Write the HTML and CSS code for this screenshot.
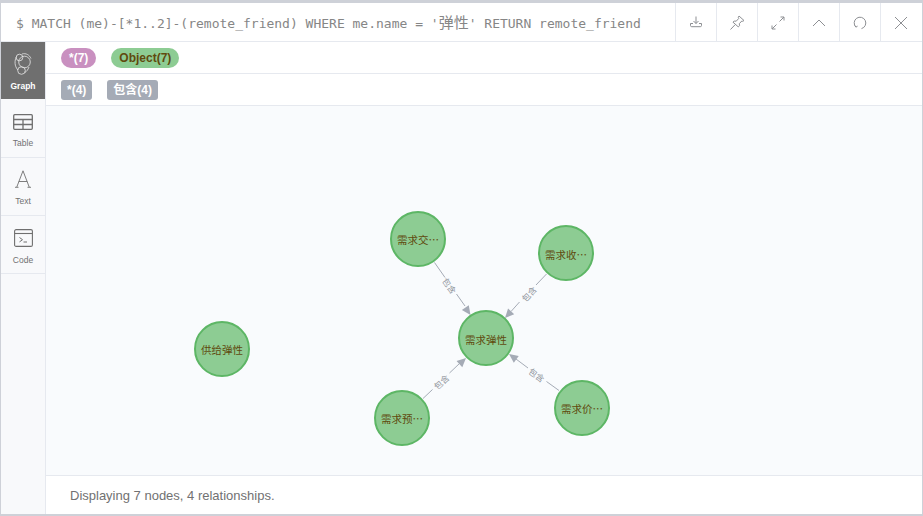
FILE: index.html
```html
<!DOCTYPE html>
<html lang="zh">
<head>
<meta charset="utf-8">
<title>Graph result</title>
<link rel="stylesheet" href="styles.css">
</head>
<body>
<div class="frame">
  <header class="topbar">
    <div class="query">$ MATCH (me)-[*1..2]-(remote_friend) WHERE me.name = '<span class="cjk">弹性</span>' RETURN remote_friend</div>
    <div class="tools">
      <div class="tool"><svg width="16" height="16" viewBox="0 0 16 16" class="ic"><path d="M8 1.500v7M5.500 6 8 8.500 10.500 6M5 8.500H2.500v2c0 .7.400 1.200 1.200 1.200h8.600c.8 0 1.200-.5 1.200-1.200v-2H11"/></svg></div>
      <div class="tool"><svg width="16" height="16" viewBox="0 0 16 16" class="ic"><path d="m10 1 5 4.500-1.200.8-1-.3-2.500 2.700.2 2-1.200 1.200L4 7.200 5.200 6l2 .2L9.700 3.500l-.4-1.200zM6 9.800 1.500 14.500"/></svg></div>
      <div class="tool"><svg width="16" height="16" viewBox="0 0 16 16" class="ic"><path d="M9.500 6.500 14 2M10.500 2H14v3.500M6.500 9.500 2 14M2 10.500V14h3.500"/></svg></div>
      <div class="tool"><svg width="16" height="16" viewBox="0 0 16 16" class="ic"><path d="M2 11 8 5l6 6"/></svg></div>
      <div class="tool"><svg width="16" height="16" viewBox="0 0 16 16" class="ic"><path d="M3.900 12.100A5.800 5.800 0 1 1 9.500 13.600M2.800 10.600l1.100 1.500 1.700-1"/></svg></div>
      <div class="tool"><svg width="16" height="16" viewBox="0 0 16 16" class="ic"><path d="m2 2 12 12M14 2 2 14"/></svg></div>
    </div>
  </header>
  <div class="body">
    <nav class="side">
      <div class="tab tab-active tab-graph">
        <svg width="18" height="22" viewBox="0 0 18 22" class="tab-ic"><g fill="none" stroke="#e8e8e8" stroke-width=".8"><circle cx="10.500" cy="9" r="5.800"/><circle cx="5.500" cy="4.500" r="3.300"/><circle cx="7.500" cy="17.500" r="3.800"/><path d="M2.500 3.500C.3 8 .5 13 3.800 17M8 1c4-1.200 7.500 1 9 4.500M15 14c-.8 2.500-2.500 4.500-4 5.500"/></g></svg>
        <span class="tab-label">Graph</span>
      </div>
      <div class="tab tab-table">
        <svg width="20" height="16" viewBox="0 0 20 16" class="tab-ic"><g fill="none" stroke="#6f6f6f" stroke-width="1.300"><rect x=".7" y=".7" width="18.600" height="14.600" rx="1"/><path d="M.7 5.500h18.600M.7 10.500h18.600M10 5.500v10"/></g></svg>
        <span class="tab-label">Table</span>
      </div>
      <div class="tab tab-text">
        <svg width="16" height="18" viewBox="0 0 16 18" class="tab-ic"><path d="M1.800 17 8 .8 14.200 17M3.800 11.500h8.400M0 17.300h3.500M12.500 17.300H16" fill="none" stroke="#6f6f6f" stroke-width=".9"/></svg>
        <span class="tab-label">Text</span>
      </div>
      <div class="tab tab-code">
        <svg width="19" height="18" viewBox="0 0 19 18" class="tab-ic"><g fill="none" stroke="#6f6f6f" stroke-width="1.100"><rect x=".6" y=".6" width="17.800" height="16.800" rx="1.500"/><path d="M.6 4.500h17.800"/><path d="m5.500 8.500 3 2.200-3 2.200M9.500 13H13" stroke-width="1"/></g></svg>
        <span class="tab-label">Code</span>
      </div>
    </nav>
    <main class="main">
      <div class="legend">
        <span class="pill pill-pink">*(7)</span>
        <span class="pill pill-green">Object(7)</span>
      </div>
      <div class="legend">
        <span class="tag">*(4)</span>
        <span class="tag">包含(4)</span>
      </div>
      <div class="canvas">
        <svg class="graph" width="875" height="369" viewBox="46 106 875 369">
          <defs>
            <g id="arrow"><path d="M0 0-9-4.200-9 4.200z" fill="#a5abb6"/></g>
          </defs>
          <g class="edge">
            <path d="M434.500 262.500 445 277.500M456.500 294 465 306"/>
            <use href="#arrow" transform="translate(470.500 315) rotate(55)"/>
            <text transform="translate(450 285.500) rotate(55)">包含</text>
          </g>
          <g class="edge">
            <path d="M546.500 274 536 285M519.500 302 511 311.500"/>
            <use href="#arrow" transform="translate(505 318) rotate(133)"/>
            <text transform="translate(528.500 293.500) rotate(-47)">包含</text>
          </g>
          <g class="edge">
            <path d="M423 398.500 432.500 389.500M449.500 373 460 363"/>
            <use href="#arrow" transform="translate(466 358) rotate(-43)"/>
            <text transform="translate(441 381.500) rotate(-43)">包含</text>
          </g>
          <g class="edge">
            <path d="M559 390.500 546.500 381.500M528 368 516 359"/>
            <use href="#arrow" transform="translate(509 354) rotate(216)"/>
            <text transform="translate(537 374.500) rotate(36)">包含</text>
          </g>
          <g class="node"><circle cx="418" cy="239" r="27"/><text x="418" y="239">需求交…</text></g>
          <g class="node"><circle cx="566" cy="253" r="27"/><text x="566" y="254">需求收…</text></g>
          <g class="node"><circle cx="486" cy="338" r="27"/><text x="486" y="339">需求弹性</text></g>
          <g class="node"><circle cx="222" cy="349" r="27"/><text x="222" y="349">供给弹性</text></g>
          <g class="node"><circle cx="402" cy="418" r="27"/><text x="402" y="418">需求预…</text></g>
          <g class="node"><circle cx="582" cy="408" r="27"/><text x="582" y="408">需求价…</text></g>
        </svg>
      </div>
      <footer class="status">Displaying 7 nodes, 4 relationships.</footer>
    </main>
  </div>
</div>
</body>
</html>
```

FILE: styles.css
```css
* { box-sizing: border-box; }
html, body { margin: 0; height: 100%; overflow: hidden; }
body {
  background: #ffffff;
  font-family: "Liberation Sans", "Noto Sans CJK SC", sans-serif;
}
.frame {
  width: 923px;
  height: 516px;
  border-top: 3px solid #ced1d8;
  border-left: 1px solid #ced1d8;
  border-right: 1px solid #ced1d8;
  border-bottom: 2px solid #ced1d8;
  display: flex;
  flex-direction: column;
  background: #fff;
}
.topbar {
  height: 39px;
  flex: none;
  display: flex;
  align-items: stretch;
  justify-content: space-between;
  border-bottom: 1px solid #e6e9ef;
}
.query {
  font-family: "DejaVu Sans Mono", "Noto Sans CJK SC", monospace;
  font-size: 13px;
  color: #868686;
  padding-left: 15px;
  line-height: 37px;
  height: 38px;
  white-space: nowrap;
}
.cjk { font-family: "Noto Sans CJK SC", sans-serif; font-size: 15px; }
.tools { display: flex; margin-right: 1px; }
.tool {
  width: 41px;
  display: flex;
  align-items: center;
  justify-content: center;
  padding-top: 1px;
  border-left: 1px solid #e6e9ef;
}
.ic { fill: none; stroke: #8d8f93; stroke-width: 1; }
.body { flex: 1; display: flex; min-height: 0; }
.side {
  width: 45px;
  flex: none;
  background: #f8f9fb;
  border-right: 1px solid #e6e9ef;
}
.tab {
  height: 58px;
  display: flex;
  flex-direction: column;
  align-items: center;
  border-bottom: 1px solid #e6e9ef;
  color: #717172;
  font-size: 8.500px;
}
.tab-graph { height: 57px; padding-top: 11px; gap: 6px; background: #6f6f6f; color: #fff; font-weight: bold; border-bottom: 0; }
.tab-table { height: 59px; padding-top: 15px; gap: 8px; }
.tab-text { padding-top: 12px; gap: 8px; }
.tab-code { padding-top: 13px; gap: 8px; }
.tab-ic { display: block; flex: none; }
.tab-label { line-height: 10px; }
.main { flex: 1; min-width: 0; display: flex; flex-direction: column; }
.legend {
  height: 32px;
  flex: none;
  display: flex;
  align-items: flex-start;
  gap: 15px;
  padding: 6px 0 0 15px;
  border-bottom: 1px solid #e6e9ef;
  font-size: 12px;
  font-weight: bold;
}
.pill {
  height: 20px;
  line-height: 20px;
  padding: 0 8px;
  border-radius: 10px;
}
.pill-pink { background: #c990c0; color: #fff; }
.pill-green { background: #8dcc93; color: #604a0e; }
.tag {
  height: 20px;
  line-height: 20px;
  padding: 0 6px;
  border-radius: 3px;
  background: #a5abb6;
  color: #fff;
}
.canvas { flex: 1; min-height: 0; background: #f9fbfd; }
.graph { display: block; }
.edge path { fill: none; stroke: #a5abb6; stroke-width: 1; }
.edge text {
  font-family: "Noto Sans CJK SC", sans-serif;
  font-size: 8.500px;
  fill: #8f939b;
  text-anchor: middle;
  dominant-baseline: central;
}
.node circle { fill: #8dcc93; stroke: #5db665; stroke-width: 2; }
.node text {
  font-family: "Noto Sans CJK SC", sans-serif;
  font-size: 10.500px;
  fill: #604a0e;
  text-anchor: middle;
  dominant-baseline: central;
}
.status {
  height: 39px;
  flex: none;
  border-top: 1px solid #e6e9ef;
  padding-left: 24px;
  line-height: 39px;
  font-size: 13px;
  color: #717172;
}
```
